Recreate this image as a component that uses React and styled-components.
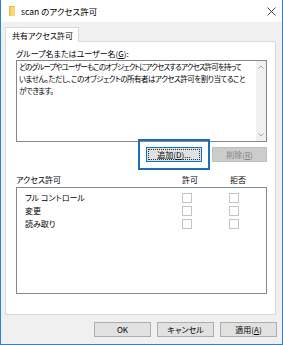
import styled, { createGlobalStyle } from 'styled-components'

const GlobalStyle = createGlobalStyle`
  html, body {
    margin: 0;
    padding: 0;
    background: #f0f0f0;
  }
  body {
    font-family: "Noto Sans CJK JP", "Noto Sans", sans-serif;
    font-size: 8px;
    color: #000;
    font-feature-settings: "palt";
  }
`

const Window = styled.div`
  width: 283px;
  height: 345px;
  box-sizing: border-box;
  border: 1px solid #2b82d4;
  border-top: none;
  background: #f0f0f0;
  display: flex;
  flex-direction: column;
  overflow: hidden;
`

const TitleBar = styled.div`
  height: 22px;
  flex-shrink: 0;
  background: #fff;
  display: flex;
  align-items: center;
  padding-left: 8px;
  gap: 6px;
`

const TitleText = styled.span`
  font-size: 8.5px;
  line-height: 1;
`

const CloseButton = styled.div`
  margin-left: auto;
  width: 22px;
  height: 22px;
  display: flex;
  align-items: center;
  justify-content: center;
`

const Body = styled.div`
  flex: 1;
  display: flex;
  flex-direction: column;
  padding: 5px 6px 0 4px;
`

const TabStrip = styled.div`
  display: flex;
`

const Tab = styled.div`
  height: 15px;
  box-sizing: border-box;
  margin-bottom: -1px;
  padding: 0 5px 0 6px;
  border: 1px solid #d9d9d9;
  border-bottom: none;
  background: #fff;
  display: flex;
  align-items: center;
  position: relative;
  z-index: 1;
`

const Panel = styled.div`
  height: 274px;
  box-sizing: border-box;
  border: 1px solid #d9d9d9;
  background: #fff;
  padding: 0 8px 0 10px;
  display: flex;
  flex-direction: column;
`

const Label = styled.div`
  margin-top: 5px;
  height: 13px;
  line-height: 13px;
`

const ListBox = styled.div`
  height: 82px;
  box-sizing: border-box;
  border: 1px solid #828790;
  display: flex;
`

const ListText = styled.div`
  flex: 1;
  min-width: 0;
  overflow: hidden;
  padding: 0 2px;
  font-size: 7.5px;
  line-height: 12px;
  white-space: nowrap;
`

const ListLine = styled.div`
  letter-spacing: ${p => p.$spacing}px;
`

const ScrollBar = styled.div`
  width: 10px;
  flex-shrink: 0;
  background: #f0f0f0;
  display: flex;
  flex-direction: column;
  justify-content: space-between;
  align-items: center;
  padding: 4px 0;
`

const ButtonRow = styled.div`
  margin-top: 5px;
  display: flex;
  justify-content: flex-end;
  gap: 10px;
`

const Button = styled.div`
  width: ${p => p.$w || 57}px;
  height: 15px;
  box-sizing: border-box;
  border: 1px solid ${p => (p.$disabled ? '#bfbfbf' : p.$default ? '#0078d7' : '#adadad')};
  background: ${p => (p.$disabled ? '#cccccc' : '#e1e1e1')};
  color: ${p => (p.$disabled ? '#838383' : '#000')};
  display: flex;
  align-items: center;
  justify-content: center;
  line-height: 1;
  position: relative;
  ${p => p.$default && `
    &::after {
      content: "";
      position: absolute;
      inset: 1px;
      border: 1px dotted #333;
    }
  `}
`

const Highlight = styled.div`
  outline: 2px solid #1a6fbd;
  outline-offset: 6px;
`

const HeaderRow = styled.div`
  margin-top: 11px;
  height: 13px;
  display: grid;
  grid-template-columns: 1fr 48px 48px;
  padding-right: 5px;
  align-items: center;
`

const HeaderCell = styled.span`
  text-align: ${p => (p.$center ? 'center' : 'left')};
`

const PermBox = styled.div`
  margin-top: 1px;
  height: 107px;
  box-sizing: border-box;
  border: 1px solid #828790;
  padding-top: 3px;
`

const PermRow = styled.div`
  height: 13px;
  display: grid;
  grid-template-columns: 1fr 10px 10px;
  column-gap: 37px;
  padding: 0 27px 0 8px;
  align-items: center;
`

const CheckBox = styled.span`
  width: 10px;
  height: 10px;
  box-sizing: border-box;
  border: 1px solid #c4c4c4;
  background: #fff;
`

const Footer = styled.div`
  margin-top: 7px;
  margin-right: -1px;
  display: flex;
  justify-content: flex-end;
  gap: 6px;
`

const FolderIcon = () => (
  <svg width="6" height="10" viewBox="0 0 6 10">
    <rect x="0" y="0" width="6" height="10" fill="#e9b949" />
    <rect x="1.5" y="1" width="4.5" height="9" fill="#f8d775" />
  </svg>
)

const Chevron = ({ up }) => (
  <svg width="6" height="4" viewBox="0 0 6 4">
    <path d={up ? 'M0.5 3.5 L3 1 L5.5 3.5' : 'M0.5 0.5 L3 3 L5.5 0.5'} fill="none" stroke="#a6a6a6" strokeWidth="1" />
  </svg>
)

const perms = ['フル コントロール', '変更', '読み取り']

const App = () => {
  return (
    <>
      <GlobalStyle />
      <Window>
        <TitleBar>
          <FolderIcon />
          <TitleText>scan のアクセス許可</TitleText>
          <CloseButton>
            <svg width="9" height="9" viewBox="0 0 9 9">
              <path d="M0.5 0.5 L8.5 8.5 M8.5 0.5 L0.5 8.5" stroke="#333" strokeWidth="0.9" />
            </svg>
          </CloseButton>
        </TitleBar>
        <Body>
          <TabStrip>
            <Tab>共有アクセス許可</Tab>
          </TabStrip>
          <Panel>
            <Label>グループ名またはユーザー名(<u>G</u>):</Label>
            <ListBox>
              <ListText>
                <ListLine $spacing={-0.9}>どのグループやユーザーもこのオブジェクトにアクセスするアクセス許可を持って</ListLine>
                <ListLine $spacing={-0.5}>いません。ただし、このオブジェクトの所有者はアクセス許可を割り当てること</ListLine>
                <ListLine $spacing={-0.5}>ができます。</ListLine>
              </ListText>
              <ScrollBar>
                <Chevron up />
                <Chevron />
              </ScrollBar>
            </ListBox>
            <ButtonRow>
              <Highlight>
                <Button $w={56} $default>追加(<u>D</u>)...</Button>
              </Highlight>
              <Button $w={55} $disabled>削除(<u>R</u>)</Button>
            </ButtonRow>
            <HeaderRow>
              <HeaderCell>アクセス許可</HeaderCell>
              <HeaderCell $center>許可</HeaderCell>
              <HeaderCell $center>拒否</HeaderCell>
            </HeaderRow>
            <PermBox>
              {perms.map(p => (
                <PermRow key={p}>
                  <span>{p}</span>
                  <CheckBox />
                  <CheckBox />
                </PermRow>
              ))}
            </PermBox>
          </Panel>
          <Footer>
            <Button>OK</Button>
            <Button>キャンセル</Button>
            <Button>適用(<u>A</u>)</Button>
          </Footer>
        </Body>
      </Window>
    </>
  )
}

export default App
